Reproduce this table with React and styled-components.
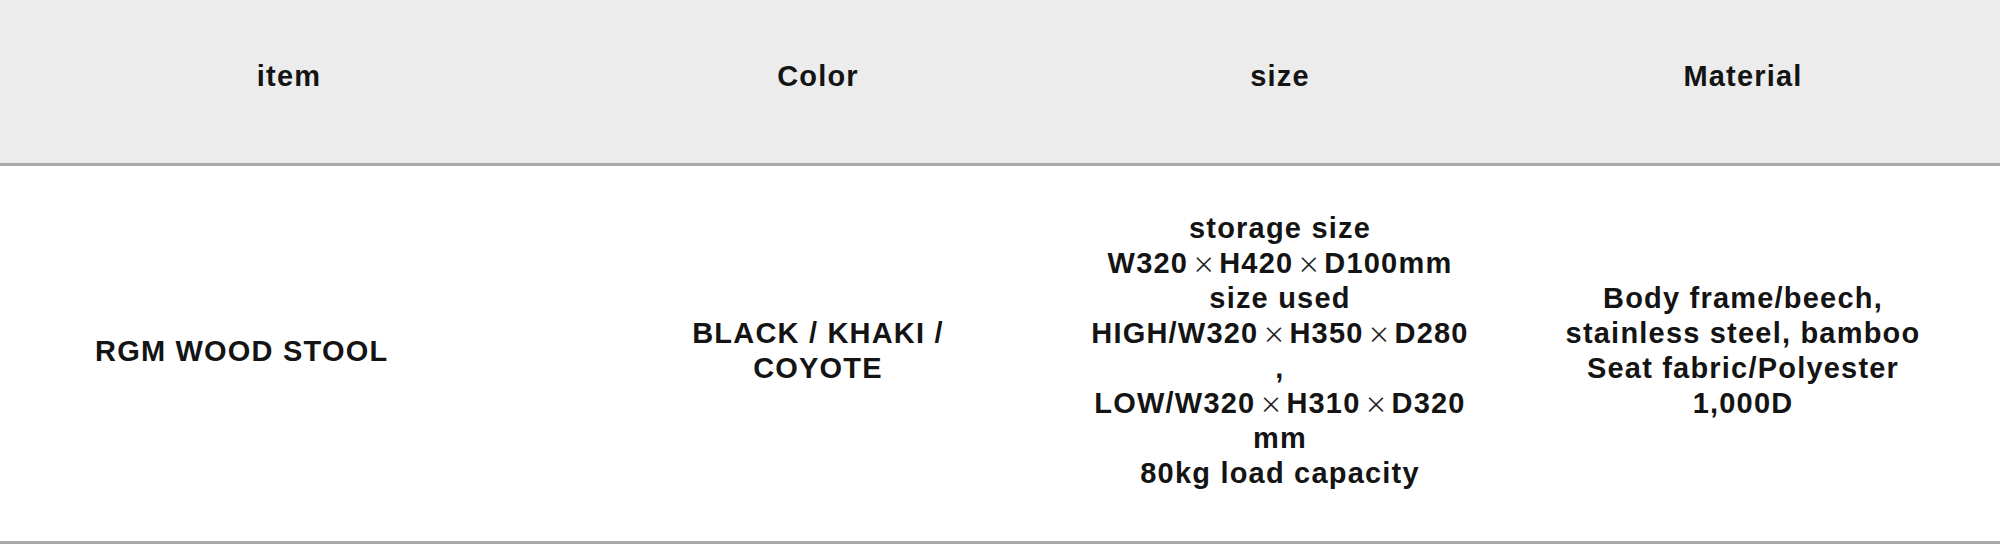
import React from 'react';
import styled, { createGlobalStyle } from 'styled-components';

const Global = createGlobalStyle`
  html, body { margin: 0; padding: 0; background: #ffffff; }
  body {
    font-family: "Liberation Sans", Arial, sans-serif;
    color: #141414;
  }
`;

const Table = styled.table`
  width: 2000px;
  border-collapse: separate;
  border-spacing: 0;
  table-layout: fixed;
  font-size: 29px;
  font-weight: 700;
  line-height: 35px;
  letter-spacing: 1.2px;
`;

const Th = styled.th`
  box-sizing: border-box;
  height: 166px;
  padding: 0 ${(p) => p.$padRight || 0}px 10px 0;
  background: #ececec;
  border-bottom: 3px solid #aaaaaa;
  text-align: center;
  vertical-align: middle;
  font-weight: 700;
`;

const Td = styled.td`
  box-sizing: border-box;
  height: 378px;
  padding: 0 ${(p) => p.$padRight || 0}px 5px ${(p) => p.$padLeft || 0}px;
  border-bottom: 3px solid #aaaaaa;
  text-align: ${(p) => p.$align || 'center'};
  vertical-align: middle;
  white-space: nowrap;
`;

const Times = styled.span`
  display: inline-block;
  margin: 0 4px;
  font-family: "Noto Sans CJK JP", sans-serif;
  font-weight: 400;
  font-size: 23px;
  line-height: 0;
  letter-spacing: 0;
  color: #222;
`;

const columns = [
  { key: 'item', label: 'item', width: 578 },
  { key: 'color', label: 'Color', width: 480 },
  { key: 'size', label: 'size', width: 444 },
  { key: 'material', label: 'Material', width: 498, padRight: 16 },
];

const renderLine = (text) =>
  text.split('×').map((part, i) => (
    <React.Fragment key={i}>
      {i > 0 && <Times>×</Times>}
      {part}
    </React.Fragment>
  ));

const Lines = ({ lines }) =>
  lines.map((l, i) => (
    <React.Fragment key={i}>
      {i > 0 && <br />}
      {renderLine(l)}
    </React.Fragment>
  ));

export default function App() {
  return (
    <>
      <Global />
      <Table>
        <colgroup>
          {columns.map((c) => (
            <col key={c.key} style={{ width: c.width }} />
          ))}
        </colgroup>
        <thead>
          <tr>
            {columns.map((c) => (
              <Th key={c.key} $padRight={c.padRight}>
                {c.label}
              </Th>
            ))}
          </tr>
        </thead>
        <tbody>
          <tr>
            <Td $align="left" $padLeft={95}>
              RGM WOOD STOOL
            </Td>
            <Td>
              <Lines lines={['BLACK / KHAKI /', 'COYOTE']} />
            </Td>
            <Td>
              <Lines
                lines={[
                  'storage size',
                  'W320×H420×D100mm',
                  'size used',
                  'HIGH/W320×H350×D280',
                  ',',
                  'LOW/W320×H310×D320',
                  'mm',
                  '80kg load capacity',
                ]}
              />
            </Td>
            <Td $padRight={16}>
              <Lines
                lines={[
                  'Body frame/beech,',
                  'stainless steel, bamboo',
                  'Seat fabric/Polyester',
                  '1,000D',
                ]}
              />
            </Td>
          </tr>
        </tbody>
      </Table>
    </>
  );
}
